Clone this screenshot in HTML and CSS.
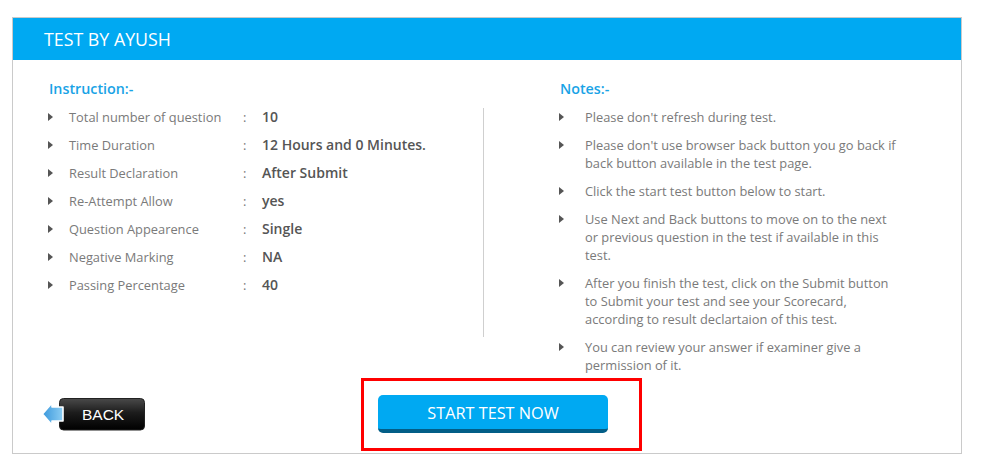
FILE: index.html
```html
<!DOCTYPE html>
<html>
<head>
<meta charset="utf-8">
<link rel="stylesheet" href="styles.css">
</head>
<body>
<div class="card">
  <div class="card-head">TEST BY AYUSH</div>
  <div class="card-body">
    <div class="col-left">
      <h3 class="sec-title">Instruction:-</h3>
      <ul class="info-list">
        <li><span class="tri"></span><span class="lbl">Total number of question</span><span class="sep">:</span><span class="val">10</span></li>
        <li><span class="tri"></span><span class="lbl">Time Duration</span><span class="sep">:</span><span class="val">12 Hours and 0 Minutes.</span></li>
        <li><span class="tri"></span><span class="lbl">Result Declaration</span><span class="sep">:</span><span class="val">After Submit</span></li>
        <li><span class="tri"></span><span class="lbl">Re-Attempt Allow</span><span class="sep">:</span><span class="val">yes</span></li>
        <li><span class="tri"></span><span class="lbl">Question Appearence</span><span class="sep">:</span><span class="val">Single</span></li>
        <li><span class="tri"></span><span class="lbl">Negative Marking</span><span class="sep">:</span><span class="val">NA</span></li>
        <li><span class="tri"></span><span class="lbl">Passing Percentage</span><span class="sep">:</span><span class="val">40</span></li>
      </ul>
    </div>
    <div class="divider"></div>
    <div class="col-right">
      <h3 class="sec-title">Notes:-</h3>
      <ul class="notes-list">
        <li><span class="tri"></span><span class="note">Please don't refresh during test.</span></li>
        <li><span class="tri"></span><span class="note">Please don't use browser back button you go back if back button available in the test page.</span></li>
        <li><span class="tri"></span><span class="note">Click the start test button below to start.</span></li>
        <li><span class="tri"></span><span class="note">Use Next and Back buttons to move on to the next or previous question in the test if available in this test.</span></li>
        <li><span class="tri"></span><span class="note">After you finish the test, click on the Submit button to Submit your test and see your Scorecard, according to result declartaion of this test.</span></li>
        <li><span class="tri"></span><span class="note">You can review your answer if examiner give a permission of it.</span></li>
      </ul>
    </div>
  </div>
  <div class="card-foot">
    <a class="back-btn" href="#">
      <svg width="103" height="33" viewBox="0 0 103 33">
        <defs>
          <linearGradient id="blk" x1="0" y1="0" x2="0" y2="1">
            <stop offset="0" stop-color="#4a4a4a"/>
            <stop offset="0.45" stop-color="#1c1c1c"/>
            <stop offset="1" stop-color="#000"/>
          </linearGradient>
          <linearGradient id="blu" x1="0" y1="0" x2="1" y2="0">
            <stop offset="0" stop-color="#3a98dc"/>
            <stop offset="1" stop-color="#8ccdf3"/>
          </linearGradient>
        </defs>
        <rect x="17.5" y="0.5" width="85" height="31.5" rx="4" fill="url(#blk)" stroke="#222"/>
        <polygon points="0.5,16 10,5 10,9 21,9 21,23 10,23 10,27" fill="url(#blu)" stroke="#fff" stroke-width="1.6" stroke-linejoin="round"/>
        <text x="40" y="22" class="back-txt">BACK</text>
      </svg>
    </a>
    <div class="start-wrap">
      <a class="start-btn" href="#">START TEST NOW</a>
    </div>
  </div>
</div>
</body>
</html>
```
FILE: styles.css
```css
html, body {
  margin: 0;
  padding: 0;
  background: #fff;
}
body {
  font-family: "Open Sans", "DejaVu Sans", sans-serif;
}
.card {
  margin: 17px 0 0 12px;
  width: 948px;
  height: 435px;
  border: 1px solid #cacaca;
  display: flex;
  flex-direction: column;
}
.card-head {
  flex: none;
  height: 42px;
  line-height: 42px;
  background: #00a9f2;
  color: #fff;
  font-size: 17.8px;
  padding-left: 31px;
}
.card-body {
  display: flex;
  align-items: flex-start;
}
.col-left {
  width: 470px;
  padding: 19px 0 0 35px;
  box-sizing: border-box;
}
.col-right {
  padding: 19px 0 0 75px;
}
.divider {
  width: 1px;
  height: 229px;
  margin-top: 48px;
  background: #cfcfcf;
}
.sec-title {
  margin: 0 0 9px 1px;
  font-size: 14.3px;
  font-weight: 600;
  line-height: 20px;
  color: #19a3e6;
}
ul {
  list-style: none;
  margin: 0;
  padding: 0;
}
.info-list li,
.notes-list li {
  display: flex;
  align-items: flex-start;
  margin-bottom: 10px;
  font-size: 12.85px;
  line-height: 18px;
  color: #7a7a7a;
}
.notes-list li:last-child {
  margin-bottom: 0;
}
.tri {
  flex: none;
  width: 0;
  height: 0;
  margin-top: 5px;
  border-left: 5px solid #555;
  border-top: 4px solid transparent;
  border-bottom: 4px solid transparent;
}
.info-list .tri {
  margin-right: 16px;
}
.notes-list .tri {
  margin-right: 21px;
}
.lbl {
  width: 174px;
}
.sep {
  width: 19px;
}
.val {
  font-size: 14px;
  font-weight: 600;
  color: #555;
}
.note {
  width: 314px;
}
.card-foot {
  flex: none;
  margin-top: auto;
  display: flex;
  align-items: flex-start;
  padding: 0 0 2px 29px;
}
.back-btn {
  display: block;
  width: 103px;
  height: 33px;
  margin-top: 20px;
}
.back-btn svg {
  display: block;
}
.back-txt {
  font-family: "Liberation Sans", Arial, sans-serif;
  font-size: 15.5px;
  fill: #fff;
}
.start-wrap {
  margin-left: 216px;
  border: 3px solid #f00;
  padding: 14px 31px 15px 14px;
}
.start-btn {
  display: block;
  width: 230px;
  height: 34px;
  line-height: 36px;
  background: #00a9f2;
  border-bottom: 4px solid #025e87;
  border-radius: 5px;
  color: #fff;
  text-align: center;
  text-decoration: none;
  font-size: 16.3px;
}
```
